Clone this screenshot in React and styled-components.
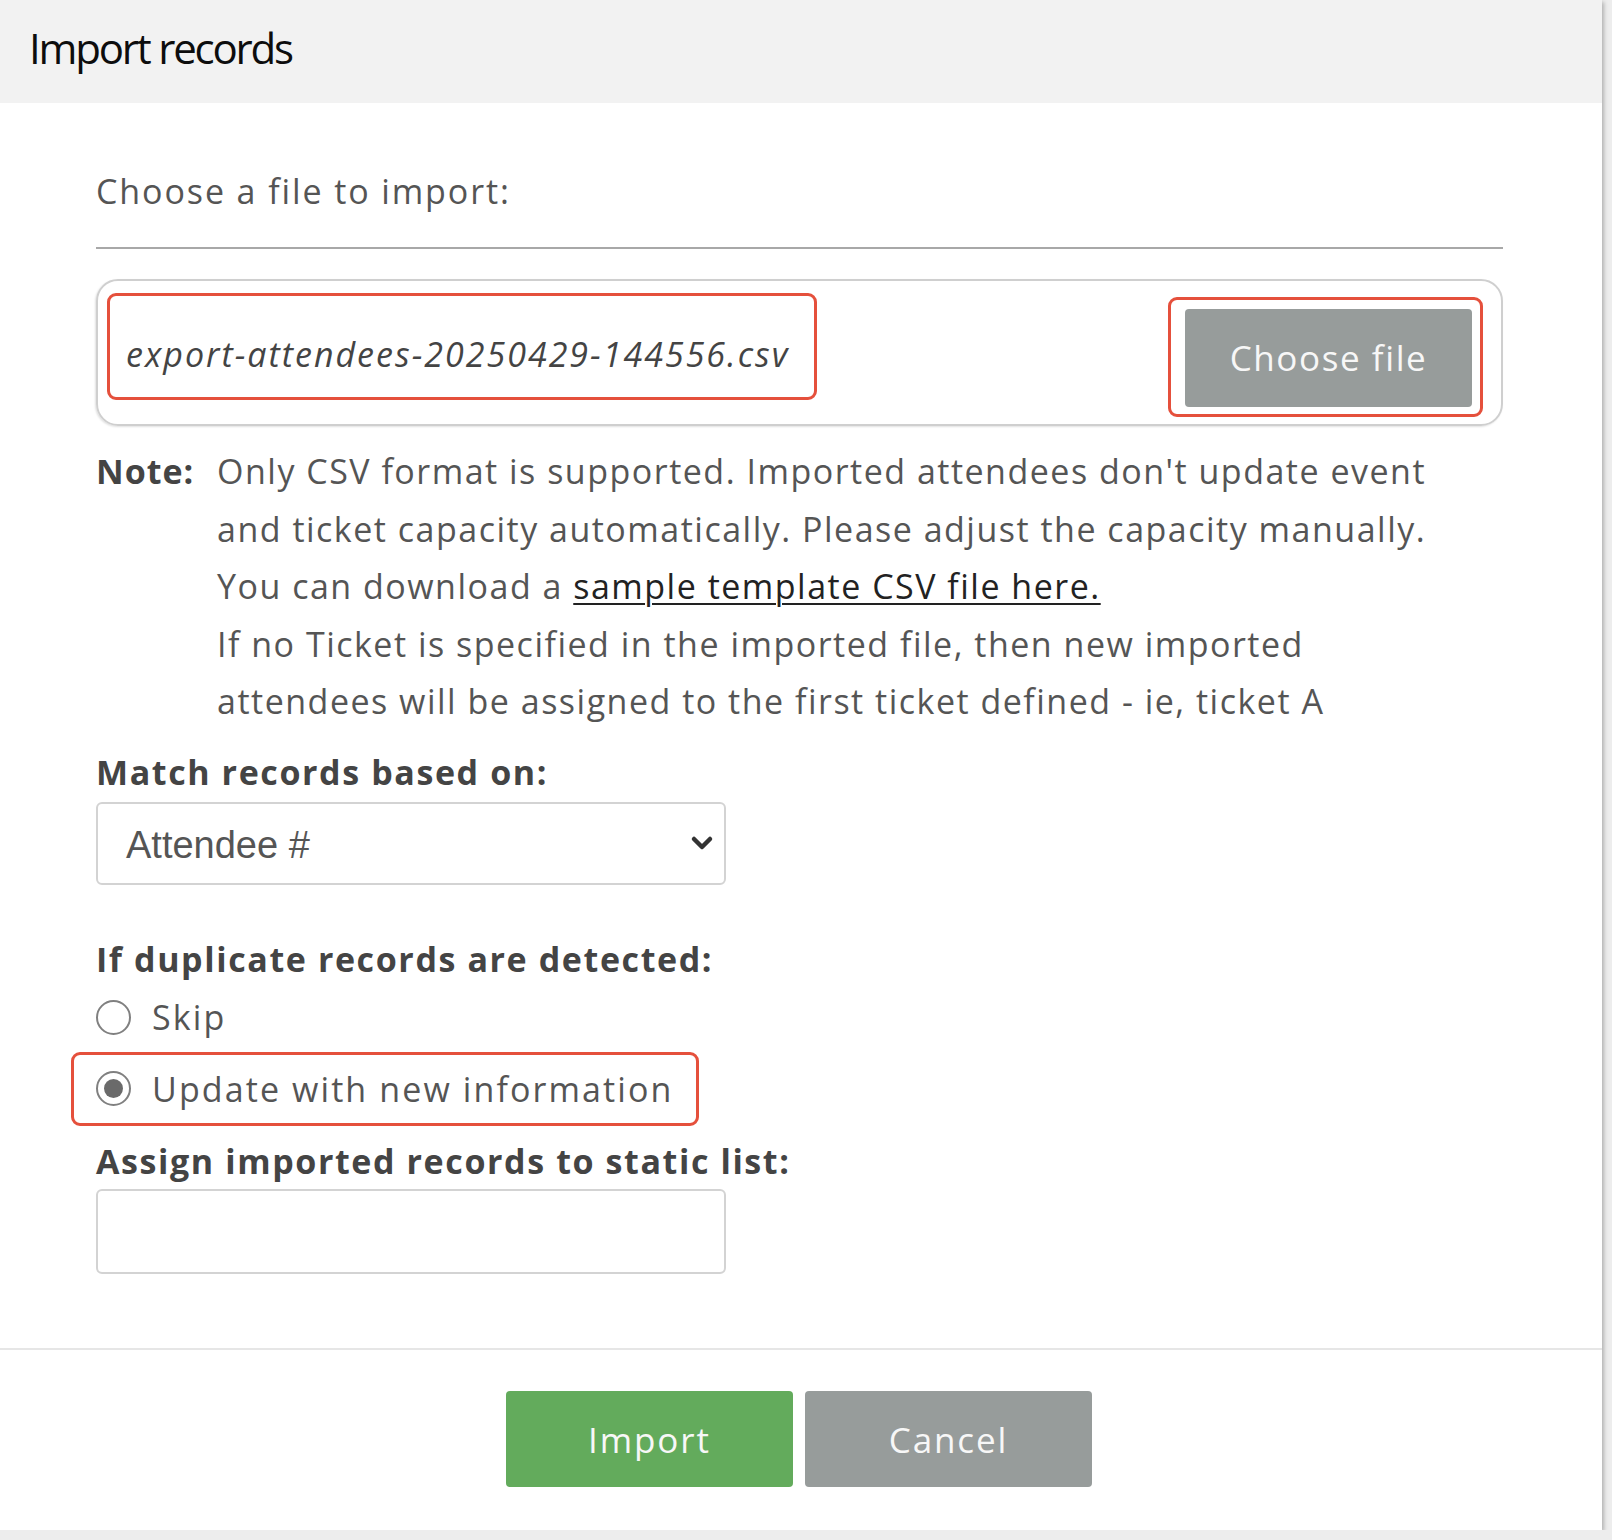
import React from 'react';
import styled, { createGlobalStyle } from 'styled-components';

const Global = createGlobalStyle`
  html, body { margin: 0; padding: 0; background: #ededed; }
  body { font-family: "Open Sans", "Noto Sans", sans-serif; }
  * { box-sizing: border-box; }
`;

const Modal = styled.div`
  width: 1602px;
  height: 1530px;
  background: #fff;
  display: flex;
  flex-direction: column;
  box-shadow: 2px 2px 4px rgba(0, 0, 0, 0.25);
`;

const Header = styled.header`
  height: 103px;
  background: #f2f2f2;
  display: flex;
  align-items: center;
  padding: 0 0 8px 29px;
`;

const Title = styled.h1`
  margin: 0;
  font-size: 42px;
  font-weight: 500;
  letter-spacing: -2.2px;
  color: #0d0d0d;
`;

const Body = styled.div`
  flex: 1;
  padding: 0 99px 0 96px;
  display: flex;
  flex-direction: column;
  align-items: flex-start;
`;

const Label = styled.div`
  margin-top: ${(p) => p.$mt || 0}px;
  font-size: 34px;
  line-height: 46px;
  color: ${(p) => (p.$bold ? '#444' : '#555')};
  font-weight: ${(p) => (p.$bold ? 700 : 400)};
  letter-spacing: ${(p) => (p.$bold ? 1.6 : 1.9)}px;
  white-space: nowrap;
`;

const Divider = styled.hr`
  align-self: stretch;
  margin: 33px 0 0;
  border: none;
  height: 2px;
  background: #a8a8a8;
`;

const FileBox = styled.div`
  align-self: stretch;
  margin-top: 30px;
  height: 147px;
  border: 2px solid #cfcfcf;
  border-radius: 22px;
  box-shadow: -1px 1px 2px rgba(0, 0, 0, 0.12);
  display: flex;
  align-items: center;
  justify-content: space-between;
  padding: 0 18px 0 9px;
`;

const Highlight = styled.div`
  border: 3px solid #e5503c;
  border-radius: 9px;
  display: flex;
  align-items: center;
`;

const FileHighlight = styled(Highlight)`
  width: 710px;
  height: 107px;
  padding: 14px 0 0 16px;
  margin-top: -12px;
`;

const FileName = styled.span`
  font-style: italic;
  font-size: 34px;
  letter-spacing: 2px;
  color: #444;
  white-space: nowrap;
`;

const ButtonHighlight = styled(Highlight)`
  padding: 9px 8px 7px 14px;
  margin-top: 8px;
`;

const Button = styled.button`
  width: 287px;
  height: ${(p) => p.$h || 96}px;
  border: none;
  border-radius: 4px;
  background: ${(p) => (p.$primary ? '#63ab5c' : '#979c9b')};
  color: #f7f7f7;
  font-family: "Open Sans", "Noto Sans", sans-serif;
  font-size: 35px;
  letter-spacing: ${(p) => p.$ls || 1.9}px;
  padding: 0;
  cursor: pointer;
`;

const Note = styled.div`
  margin-top: 17px;
  display: grid;
  grid-template-columns: 121px auto;
  font-size: 34px;
  line-height: 57.6px;
  color: #555;
  letter-spacing: 1.5px;
`;

const NoteTag = styled.span`
  font-weight: 700;
  color: #444;
  letter-spacing: 1px;
`;

const NoteLines = styled.div`
  display: flex;
  flex-direction: column;
`;

const NoteLine = styled.span`
  white-space: nowrap;
`;

const Link = styled.a`
  color: #222;
  text-decoration: underline;
  text-underline-offset: 4px;
  text-decoration-thickness: 2px;
`;

const Field = styled.div`
  margin-top: ${(p) => p.$mt || 0}px;
  width: 630px;
  height: ${(p) => p.$h || 83}px;
  border: 2px solid #d3d3d3;
  border-radius: 6px;
  display: flex;
  align-items: center;
  padding: 0 10px 0 28px;
  justify-content: space-between;
`;

const SelectText = styled.span`
  font-family: "Liberation Sans", Arial, sans-serif;
  font-size: 38px;
  color: #555;
  padding-top: 4px;
`;

const RadioRow = styled.label`
  display: flex;
  align-items: center;
  gap: 21px;
  height: 57px;
  margin-top: ${(p) => p.$mt || 0}px;
  font-size: 34px;
  letter-spacing: 2.1px;
  color: #555;
`;

const RadioHighlight = styled(Highlight)`
  margin-top: 6px;
  margin-left: -25px;
  width: 628px;
  height: 74px;
  padding-left: 22px;
`;

const RadioCircle = styled.span`
  width: 35px;
  height: 35px;
  border-radius: 50%;
  border: 2px solid #808080;
  background: #fff;
  display: flex;
  align-items: center;
  justify-content: center;
  flex: none;
  &::after {
    content: '';
    width: ${(p) => (p.$checked ? 19 : 0)}px;
    height: ${(p) => (p.$checked ? 19 : 0)}px;
    border-radius: 50%;
    background: #6a6a6a;
  }
`;

const Footer = styled.footer`
  height: 182px;
  border-top: 2px solid #e6e6e6;
  display: flex;
  justify-content: center;
  gap: 12px;
  padding: 41px 4px 0 0;
`;

const Chevron = () => (
  <svg width="24" height="16" viewBox="0 0 24 16">
    <polyline points="4,4 12,12 20,4" fill="none" stroke="#333" strokeWidth="4.5" strokeLinecap="round" strokeLinejoin="round" />
  </svg>
);

export default function App() {
  return (
    <>
      <Global />
      <Modal>
        <Header>
          <Title>Import records</Title>
        </Header>
        <Body>
          <Label $mt={65}>Choose a file to import:</Label>
          <Divider />
          <FileBox>
            <FileHighlight>
              <FileName>export-attendees-20250429-144556.csv</FileName>
            </FileHighlight>
            <ButtonHighlight>
              <Button $h={98} $ls={1.6}>Choose file</Button>
            </ButtonHighlight>
          </FileBox>
          <Note>
            <NoteTag>Note:</NoteTag>
            <NoteLines>
              <NoteLine>Only CSV format is supported. Imported attendees don't update event</NoteLine>
              <NoteLine>and ticket capacity automatically. Please adjust the capacity manually.</NoteLine>
              <NoteLine>
                You can download a <Link href="#">sample template CSV file here.</Link>
              </NoteLine>
              <NoteLine>If no Ticket is specified in the imported file, then new imported</NoteLine>
              <NoteLine>attendees will be assigned to the first ticket defined - ie, ticket A</NoteLine>
            </NoteLines>
          </Note>
          <Label $bold $mt={18}>Match records based on:</Label>
          <Field $mt={7} $h={83}>
            <SelectText>Attendee #</SelectText>
            <Chevron />
          </Field>
          <Label $bold $mt={51}>If duplicate records are detected:</Label>
          <RadioRow $mt={7}>
            <RadioCircle />
            Skip
          </RadioRow>
          <RadioHighlight>
            <RadioRow>
              <RadioCircle $checked />
              Update with new information
            </RadioRow>
          </RadioHighlight>
          <Label $bold $mt={12}>Assign imported records to static list:</Label>
          <Field $mt={5} $h={85} />
        </Body>
        <Footer>
          <Button $primary>Import</Button>
          <Button>Cancel</Button>
        </Footer>
      </Modal>
    </>
  );
}
